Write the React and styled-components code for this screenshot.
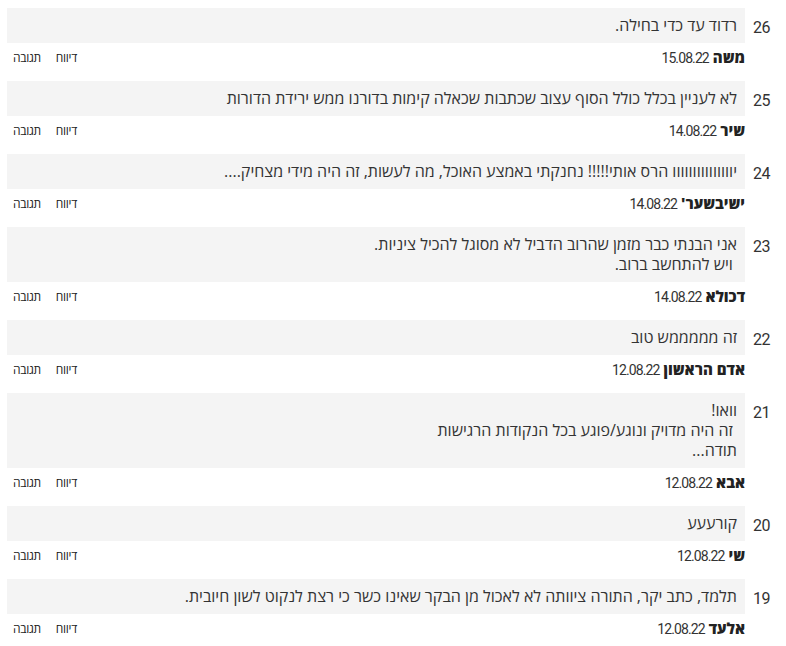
import React from 'react';
import styled, { createGlobalStyle } from 'styled-components';

const comments = [
  { id: 26, text: 'רדוד עד כדי בחילה.', name: 'משה', date: '15.08.22' },
  { id: 25, text: 'לא לעניין בכלל כולל הסוף עצוב שכתבות שכאלה קימות בדורנו ממש ירידת הדורות', name: 'שיר', date: '14.08.22' },
  { id: 24, text: 'יווווווווווווווו הרס אותי!!!!! נחנקתי באמצע האוכל, מה לעשות, זה היה מידי מצחיק....', name: 'ישיבשער\'', date: '14.08.22' },
  { id: 23, text: 'אני הבנתי כבר מזמן שהרוב הדביל לא מסוגל להכיל ציניות.\n ויש להתחשב ברוב.', name: 'דכולא', date: '14.08.22' },
  { id: 22, text: 'זה מממממש טוב', name: 'אדם הראשון', date: '12.08.22' },
  { id: 21, text: 'וואו!\n זה היה מדויק ונוגע/פוגע בכל הנקודות הרגישות\nתודה...', name: 'אבא', date: '12.08.22' },
  { id: 20, text: 'קורעעע', name: 'שי', date: '12.08.22' },
  { id: 19, text: 'תלמד, כתב יקר, התורה ציוותה לא לאכול מן הבקר שאינו כשר כי רצת לנקוט לשון חיובית.', name: 'אלעד', date: '12.08.22' },
];

const App = () => (
  <>
    <GlobalStyle />
    <List>
      {comments.map((c) => (
        <Item key={c.id}>
          <Num>{c.id}</Num>
          <Body>
            <Bubble>{c.text}</Bubble>
            <Footer>
              <Author>
                <Name>{c.name}</Name>
                <Date>{c.date}</Date>
              </Author>
              <Actions>
                <Action>דיווח</Action>
                <Action>תגובה</Action>
              </Actions>
            </Footer>
          </Body>
        </Item>
      ))}
    </List>
  </>
);

export default App;

const GlobalStyle = createGlobalStyle`
  body {
    margin: 0;
    background: #fff;
    font-family: "Open Sans", "Liberation Sans", "DejaVu Sans", sans-serif;
    color: #333;
  }
`;

const List = styled.div`
  direction: rtl;
  width: 786px;
  padding: 8px 0 0 7px;
  box-sizing: border-box;
`;

const Item = styled.div`
  display: grid;
  grid-template-columns: 41px 1fr;
  margin-bottom: 14px;
`;

const Num = styled.div`
  font-family: Roboto, "Liberation Sans", sans-serif;
  font-size: 16px;
  letter-spacing: -0.5px;
  color: #333;
  padding: 10px 16px 0 0;
  text-align: right;
`;

const Body = styled.div`
  display: flex;
  flex-direction: column;
`;

const Bubble = styled.div`
  background: #f4f4f4;
  padding: 7px 8px 8px;
  font-size: 16px;
  line-height: 20px;
  color: #333;
  white-space: pre-wrap;
`;

const Footer = styled.div`
  display: flex;
  justify-content: space-between;
  align-items: center;
  padding-top: 4px;
  height: 20px;
`;

const Author = styled.div`
  display: flex;
  align-items: baseline;
  gap: 4px;
`;

const Name = styled.span`
  font-weight: 900;
  font-size: 15px;
  color: #222;
`;

const Date = styled.span`
  font-family: Roboto, "Liberation Sans", sans-serif;
  font-size: 14px;
  letter-spacing: -0.9px;
  color: #333;
`;

const Actions = styled.div`
  display: flex;
  gap: 15px;
  padding-left: 6px;
`;

const Action = styled.span`
  font-size: 12px;
  letter-spacing: -0.3px;
  color: #222;
  cursor: pointer;
`;
